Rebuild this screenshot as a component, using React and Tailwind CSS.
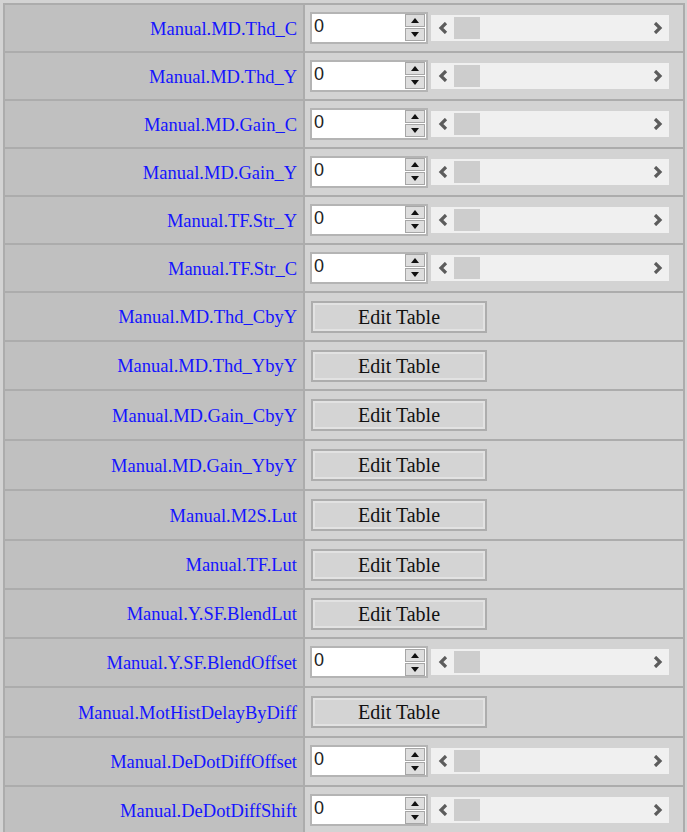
import React from "react";

const rows = [
  { label: "Manual.MD.Thd_C", kind: "num", h: 48 },
  { label: "Manual.MD.Thd_Y", kind: "num", h: 48 },
  { label: "Manual.MD.Gain_C", kind: "num", h: 48 },
  { label: "Manual.MD.Gain_Y", kind: "num", h: 48 },
  { label: "Manual.TF.Str_Y", kind: "num", h: 48 },
  { label: "Manual.TF.Str_C", kind: "num", h: 48 },
  { label: "Manual.MD.Thd_CbyY", kind: "table", h: 49 },
  { label: "Manual.MD.Thd_YbyY", kind: "table", h: 49 },
  { label: "Manual.MD.Gain_CbyY", kind: "table", h: 50 },
  { label: "Manual.MD.Gain_YbyY", kind: "table", h: 50 },
  { label: "Manual.M2S.Lut", kind: "table", h: 50 },
  { label: "Manual.TF.Lut", kind: "table", h: 49 },
  { label: "Manual.Y.SF.BlendLut", kind: "table", h: 49 },
  { label: "Manual.Y.SF.BlendOffset", kind: "num", h: 49 },
  { label: "Manual.MotHistDelayByDiff", kind: "table", h: 50 },
  { label: "Manual.DeDotDiffOffset", kind: "num", h: 49 },
  { label: "Manual.DeDotDiffShift", kind: "num", h: 49 },
];

function Chevron({ dir }) {
  const d = dir === "left" ? "M8 1 L3 6 L8 11" : "M2 1 L7 6 L2 11";
  return (
    <svg width="10" height="12" viewBox="0 0 10 12">
      <path d={d} fill="none" stroke="#5c5c5c" strokeWidth="3.2" />
    </svg>
  );
}

function Spinner() {
  return (
    <div className="flex flex-col gap-[1px] py-[1px] pr-[1px]">
      <div className="flex h-[13px] w-[20px] items-center justify-center border border-[#a6a6a6] bg-[#dedede]">
        <svg width="8" height="5" viewBox="0 0 8 5">
          <path d="M0 5 L4 0 L8 5 Z" fill="#111" />
        </svg>
      </div>
      <div className="flex h-[13px] w-[20px] items-center justify-center border border-[#a6a6a6] bg-[#dedede]">
        <svg width="8" height="5" viewBox="0 0 8 5">
          <path d="M0 0 L8 0 L4 5 Z" fill="#111" />
        </svg>
      </div>
    </div>
  );
}

function NumberControl() {
  return (
    <div className="flex items-center gap-[3px] pl-[5px]">
      <div className="-mt-[1px] flex h-[32px] w-[118px] items-center justify-between border-2 border-[#b4b4b4] bg-white">
        <span className="self-start pl-[2px] pt-[2px] font-['Liberation_Sans',sans-serif] text-[18px] leading-[20px] text-[#222]">
          0
        </span>
        <Spinner />
      </div>
      <div className="-mt-[1px] flex h-[26px] w-[238px] items-center bg-[#f0f0f0]">
        <div className="flex w-[23px] justify-center">
          <Chevron dir="left" />
        </div>
        <div className="h-[22px] w-[26px] bg-[#cdcdcd]" />
        <div className="flex-1" />
        <div className="flex w-[23px] justify-center">
          <Chevron dir="right" />
        </div>
      </div>
    </div>
  );
}

function EditButton() {
  return (
    <div className="pl-[6px]">
      <button className="h-[32px] w-[176px] border-2 border-[#adadad] bg-[#d4d4d4] font-['Liberation_Serif',serif] text-[20px] leading-none text-[#111] shadow-[inset_0_0_0_2px_#e2e2e2]">
        Edit Table
      </button>
    </div>
  );
}

export default function App() {
  return (
    <div className="h-[832px] w-[687px] overflow-hidden bg-[#d3d3d3]">
      <div className="ml-[3px] mt-[3px] w-[682px] border-x-2 border-[#acacac]">
        {rows.map((r) => (
          <div
            key={r.label}
            className="flex border-t-2 border-[#acacac]"
            style={{ height: r.h }}
          >
            <div className="flex w-[300px] items-center justify-end border-r-2 border-[#acacac] bg-[#c0c0c0] pr-[6px] pt-[3px] font-['Liberation_Serif',serif] text-[18.5px] text-[#1414ff]">
              {r.label}
            </div>
            <div className="flex flex-1 items-center bg-[#d3d3d3]">
              {r.kind === "num" ? <NumberControl /> : <EditButton />}
            </div>
          </div>
        ))}
      </div>
    </div>
  );
}
